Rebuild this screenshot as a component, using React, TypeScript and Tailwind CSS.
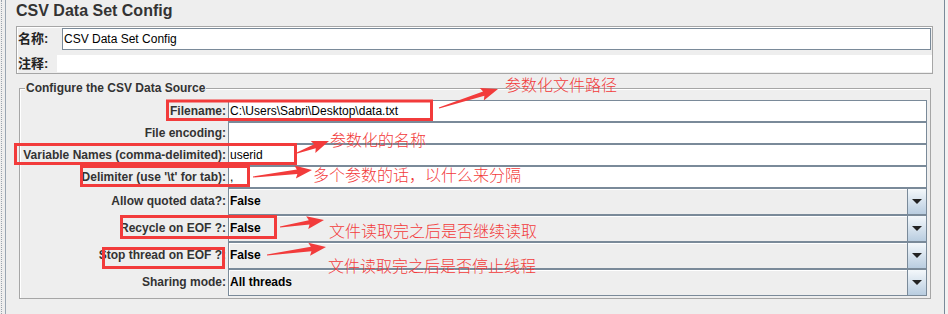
const font = "font-['Liberation_Sans','Noto_Sans_CJK_SC',sans-serif]";

type Row = { label: string; value: string };

const textRows: Row[] = [
    { label: "Filename:", value: "C:\\Users\\Sabri\\Desktop\\data.txt" },
    { label: "File encoding:", value: "" },
    { label: "Variable Names (comma-delimited):", value: "userid" },
    { label: "Delimiter (use '\\t' for tab):", value: "," },
];

const comboRows: Row[] = [
    { label: "Allow quoted data?:", value: "False" },
    { label: "Recycle on EOF ?:", value: "False" },
    { label: "Stop thread on EOF ?:", value: "False" },
    { label: "Sharing mode:", value: "All threads" },
];

// red boxes drawn over the screenshot: [x, y, w, h]
const boxes = [
    [167.5, 101, 264, 18.5],
    [15.5, 144.5, 280, 19],
    [81.5, 166.5, 167, 19],
    [121.5, 216.5, 154, 21],
    [103.5, 248.5, 120, 19],
];

// arrows: tail -> tip
const arrows = [
    [439, 108, 498, 89],
    [297, 153, 329, 141],
    [253, 177, 312, 170],
    [280, 227, 324, 220],
    [267, 255, 326, 247],
];

const notes = [
    { text: "参数化文件路径", x: 505, y: 76 },
    { text: "参数化的名称", x: 330, y: 131 },
    { text: "多个参数的话，以什么来分隔", x: 313, y: 166 },
    { text: "文件读取完之后是否继续读取", x: 329, y: 222 },
    { text: "文件读取完之后是否停止线程", x: 328, y: 257 },
];

function arrowPoints(x1: number, y1: number, x2: number, y2: number) {
    const dx = x2 - x1;
    const dy = y2 - y1;
    const len = Math.hypot(dx, dy);
    const ux = dx / len;
    const uy = dy / len;
    const nx = -uy;
    const ny = ux;
    const head = 15;
    const bx = x2 - ux * head;
    const by = y2 - uy * head;
    const p = (x: number, y: number, w: number) => `${x + nx * w},${y + ny * w}`;
    return [
        p(x1, y1, 0.6),
        p(bx, by, 2.2),
        p(bx - ux * 2, by - uy * 2, 6.5),
        `${x2},${y2}`,
        p(bx - ux * 2, by - uy * 2, -6.5),
        p(bx, by, -2.2),
        p(x1, y1, -0.6),
    ].join(" ");
}

function TextRow({ label, value }: Row) {
    return (
        <div className="flex h-[22px]">
            <div className="w-[208px] pr-[2px] text-right text-[12px] font-bold leading-[22px] text-[#333333] whitespace-nowrap">
                {label}
            </div>
            <div className="w-[699px] h-[22px] border border-[#7a8a99] bg-white pl-[1px] text-[12px] leading-[20px] text-black">
                {value}
            </div>
        </div>
    );
}

function ComboRow({ label, value }: Row) {
    return (
        <div className="flex h-[27px]">
            <div className="w-[208px] pr-[2px] text-right text-[12px] font-bold leading-[27px] text-[#333333] whitespace-nowrap">
                {label}
            </div>
            <div className="flex w-[699px] h-[27px] border border-[#7a8a99] bg-[#eeeeee] shadow-[inset_1px_1px_0_#ffffff]">
                <div className="flex-1 pl-[1px] text-[12px] font-bold leading-[25px] text-black">
                    {value}
                </div>
                <div className="flex w-[19px] items-center justify-center border-l border-[#7a8a99] bg-gradient-to-b from-[#f4f8fb] to-[#b9cde0]">
                    <div className="h-0 w-0 border-l-[5px] border-r-[5px] border-t-[5px] border-l-transparent border-r-transparent border-t-[#222222]" />
                </div>
            </div>
        </div>
    );
}

export default function App() {
    return (
        <div className={`relative flex w-[948px] h-[314px] overflow-hidden bg-[#eeeeee] ${font}`}>

            {/* left tree splitter */}
            <div className="ml-px h-full w-px border-l border-dotted border-[#9aa3ad]" />
            <div className="ml-[3px] h-full w-px bg-[#9aa6b2]" />

            <div className="flex w-[938px] flex-col pl-[10px]">

                <div className="h-[26px] pt-px text-[16px] font-bold leading-[20px] text-[#333333]">
                    CSV Data Set Config
                </div>

                <div className="flex w-[917px] h-[48px] flex-col border border-[#a6a6a6] shadow-[inset_1px_1px_0_#ffffff]">
                    <div className="flex h-[23px] pt-px">
                        <div className="w-[45px] pl-px text-[13px] font-bold leading-[22px] text-[#222222]">
                            名称:
                        </div>
                        <div className="mr-px flex-1 h-[22px] border border-[#7a8a99] bg-white pl-px text-[12px] leading-[20px] text-black">
                            CSV Data Set Config
                        </div>
                    </div>
                    <div className="mt-[5px] flex h-[17px]">
                        <div className="w-[40px] pl-px text-[13px] font-bold leading-[17px] text-[#222222]">
                            注释:
                        </div>
                        <div className="flex-1 bg-white" />
                    </div>
                </div>

                <div className="relative ml-[3px] mt-[14px] flex w-[912px] h-[211px] flex-col border border-[#a6a6a6] pt-[11px] shadow-[inset_1px_1px_0_#ffffff]">
                    <span className="absolute left-[5px] top-[-8px] bg-[#eeeeee] px-px text-[12px] font-bold leading-[14px] text-[#333333]">
                        Configure the CSV Data Source
                    </span>
                    {textRows.map((row) => (
                        <TextRow key={row.label} {...row} />
                    ))}
                    {comboRows.map((row) => (
                        <ComboRow key={row.label} {...row} />
                    ))}
                </div>
            </div>

            {/* right panel edge */}
            <div className="h-full w-px bg-[#7a8a99]" />
            <div className="h-full flex-1 bg-[#f2f2f2]" />

            {/* red annotations on top */}
            <svg className="pointer-events-none absolute left-0 top-0" width="948" height="314">
                {boxes.map(([x, y, w, h], i) => (
                    <rect key={i} x={x} y={y} width={w} height={h} fill="none" stroke="#f23b3b" strokeWidth="3" />
                ))}
                {arrows.map(([x1, y1, x2, y2], i) => (
                    <polygon key={i} points={arrowPoints(x1, y1, x2, y2)} fill="#f23b3b" />
                ))}
            </svg>
            {notes.map((n) => (
                <span
                    key={n.text}
                    className="pointer-events-none absolute whitespace-nowrap text-[16px] leading-[16px] text-[#f23b3b] font-['Noto_Sans_CJK_SC',sans-serif] font-light"
                    style={{ left: n.x, top: n.y }}
                >
                    {n.text}
                </span>
            ))}
        </div>
    );
}
